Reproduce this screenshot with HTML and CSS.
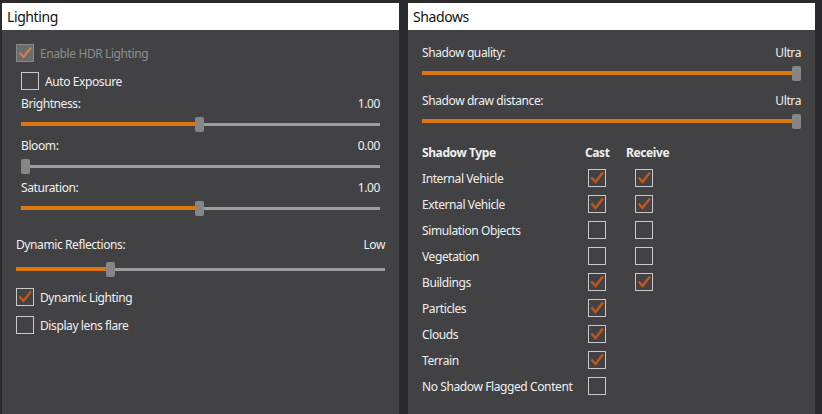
FILE: index.html
```html
<!DOCTYPE html>
<html lang="en">
<head>
  <meta charset="UTF-8" />
  <title>Graphics Settings</title>
  <link rel="stylesheet" href="styles.css">
</head>
<body>
  <div class="panel panel-lighting">
    <div class="panel-header">Lighting</div>
    <div class="panel-body">
      <label class="check-row disabled">
        <span class="box checked"><svg viewBox="0 0 16 16"><polyline points="2.5,7.5 6.5,12 14,2.5"/></svg></span>
        Enable HDR Lighting
      </label>

      <div class="indent">
        <label class="check-row">
          <span class="box"></span>
          Auto Exposure
        </label>

        <div class="setting">
          <div class="setting-label"><span>Brightness:</span><span>1.00</span></div>
          <div class="slider">
            <div class="fill" style="width: 174px"></div>
            <div class="thumb"></div>
            <div class="rest"></div>
          </div>
        </div>

        <div class="setting">
          <div class="setting-label"><span>Bloom:</span><span>0.00</span></div>
          <div class="slider">
            <div class="fill" style="width: 0px"></div>
            <div class="thumb"></div>
            <div class="rest"></div>
          </div>
        </div>

        <div class="setting">
          <div class="setting-label"><span>Saturation:</span><span>1.00</span></div>
          <div class="slider">
            <div class="fill" style="width: 174px"></div>
            <div class="thumb"></div>
            <div class="rest"></div>
          </div>
        </div>
      </div>

      <div class="setting reflections">
        <div class="setting-label"><span>Dynamic Reflections:</span><span>Low</span></div>
        <div class="slider">
          <div class="fill" style="width: 90px"></div>
          <div class="thumb"></div>
          <div class="rest"></div>
        </div>
      </div>

      <label class="check-row dyn-light">
        <span class="box checked"><svg viewBox="0 0 16 16"><polyline points="2.5,7.5 6.5,12 14,2.5"/></svg></span>
        Dynamic Lighting
      </label>
      <label class="check-row">
        <span class="box"></span>
        Display lens flare
      </label>
    </div>
  </div>

  <div class="panel panel-shadows">
    <div class="panel-header">Shadows</div>
    <div class="panel-body">
      <div class="setting first">
        <div class="setting-label"><span>Shadow quality:</span><span>Ultra</span></div>
        <div class="slider">
          <div class="fill" style="width: 370px"></div>
          <div class="thumb"></div>
          <div class="rest"></div>
        </div>
      </div>

      <div class="setting draw-dist">
        <div class="setting-label"><span>Shadow draw distance:</span><span>Ultra</span></div>
        <div class="slider">
          <div class="fill" style="width: 370px"></div>
          <div class="thumb"></div>
          <div class="rest"></div>
        </div>
      </div>

      <div class="shadow-table">
        <div class="th">Shadow Type</div><div class="th center">Cast</div><div class="th center">Receive</div>

        <div>Internal Vehicle</div>
        <span class="box checked cast"><svg viewBox="0 0 16 16"><polyline points="2.5,7.5 6.5,12 14,2.5"/></svg></span>
        <span class="box checked recv"><svg viewBox="0 0 16 16"><polyline points="2.5,7.5 6.5,12 14,2.5"/></svg></span>

        <div>External Vehicle</div>
        <span class="box checked cast"><svg viewBox="0 0 16 16"><polyline points="2.5,7.5 6.5,12 14,2.5"/></svg></span>
        <span class="box checked recv"><svg viewBox="0 0 16 16"><polyline points="2.5,7.5 6.5,12 14,2.5"/></svg></span>

        <div>Simulation Objects</div>
        <span class="box cast"></span>
        <span class="box recv"></span>

        <div>Vegetation</div>
        <span class="box cast"></span>
        <span class="box recv"></span>

        <div>Buildings</div>
        <span class="box checked cast"><svg viewBox="0 0 16 16"><polyline points="2.5,7.5 6.5,12 14,2.5"/></svg></span>
        <span class="box checked recv"><svg viewBox="0 0 16 16"><polyline points="2.5,7.5 6.5,12 14,2.5"/></svg></span>

        <div>Particles</div>
        <span class="box checked cast"><svg viewBox="0 0 16 16"><polyline points="2.5,7.5 6.5,12 14,2.5"/></svg></span>
        <span></span>

        <div>Clouds</div>
        <span class="box checked cast"><svg viewBox="0 0 16 16"><polyline points="2.5,7.5 6.5,12 14,2.5"/></svg></span>
        <span></span>

        <div>Terrain</div>
        <span class="box checked cast"><svg viewBox="0 0 16 16"><polyline points="2.5,7.5 6.5,12 14,2.5"/></svg></span>
        <span></span>

        <div>No Shadow Flagged Content</div>
        <span class="box cast"></span>
        <span></span>
      </div>
    </div>
  </div>
</body>
</html>
```

FILE: styles.css
```css
html, body {
  height: 100%;
}

body {
  margin: 0;
  padding: 3px 7px 0 2px;
  box-sizing: border-box;
  display: flex;
  gap: 9px;
  overflow: hidden;
  background-color: #2b2b2d;
  font-family: 'Noto Sans', 'Open Sans', sans-serif;
  font-size: 12px;
  letter-spacing: -0.4px;
  color: #f0f0f0;
}

.panel {
  display: flex;
  flex-direction: column;
}

.panel-lighting { width: 397px; }
.panel-shadows { width: 407px; }

.panel-header {
  height: 27px;
  line-height: 27px;
  padding-left: 5px;
  background: #fff;
  color: #111;
  font-size: 14px;
  letter-spacing: -0.4px;
}

.panel-body {
  flex: 1;
  background: #424244;
  padding: 14px 14px 0;
}

.panel-shadows .panel-body {
  padding: 15px 14px 0;
}

.indent {
  padding: 0 5px;
}

/* checkboxes */
.check-row {
  display: flex;
  align-items: center;
  gap: 6px;
  height: 18px;
  margin-top: 10px;
}

.panel-body > .check-row:first-child { margin-top: 0; }

.box {
  width: 18px;
  height: 18px;
  box-sizing: border-box;
  border: 1px solid #c9c9c9;
  display: flex;
  align-items: center;
  justify-content: center;
}

.box svg {
  width: 16px;
  height: 16px;
  fill: none;
  stroke: #c4581a;
  stroke-width: 2.4;
}

.disabled {
  color: #8e8e8e;
}

.disabled .box {
  background: #6c6c6c;
  border-color: #8a8a8a;
}

.disabled .box svg {
  stroke: #c9804f;
}

/* sliders */
.setting {
  margin-top: 6px;
}

.setting.first {
  margin-top: 0;
}

.setting-label {
  display: flex;
  justify-content: space-between;
  height: 16px;
  line-height: 16px;
}

.slider {
  display: flex;
  align-items: center;
  height: 16px;
  margin-top: 4px;
}

.slider .fill {
  height: 4px;
  background: #dc770f;
}

.slider .thumb {
  width: 9px;
  height: 15px;
  border-radius: 2px;
  background: #868686;
  flex: none;
}

.slider .rest {
  flex: 1;
  height: 3px;
  background: #9d9d9d;
}

.reflections {
  margin-top: 21px;
}

.reflections .slider {
  margin-top: 8px;
}

.dyn-light {
  margin-top: 11px;
}

.draw-dist {
  margin-top: 12px;
}

/* shadow table */
.shadow-table {
  display: grid;
  grid-template-columns: 146px 24px 42px;
  grid-auto-rows: 26px;
  column-gap: 17px;
  align-items: center;
  margin-top: 10px;
  white-space: nowrap;
}

.th {
  font-weight: bold;
}

.center {
  text-align: center;
}

.shadow-table .cast {
  justify-self: center;
}

.shadow-table .recv {
  justify-self: start;
  margin-left: 9px;
}
```
